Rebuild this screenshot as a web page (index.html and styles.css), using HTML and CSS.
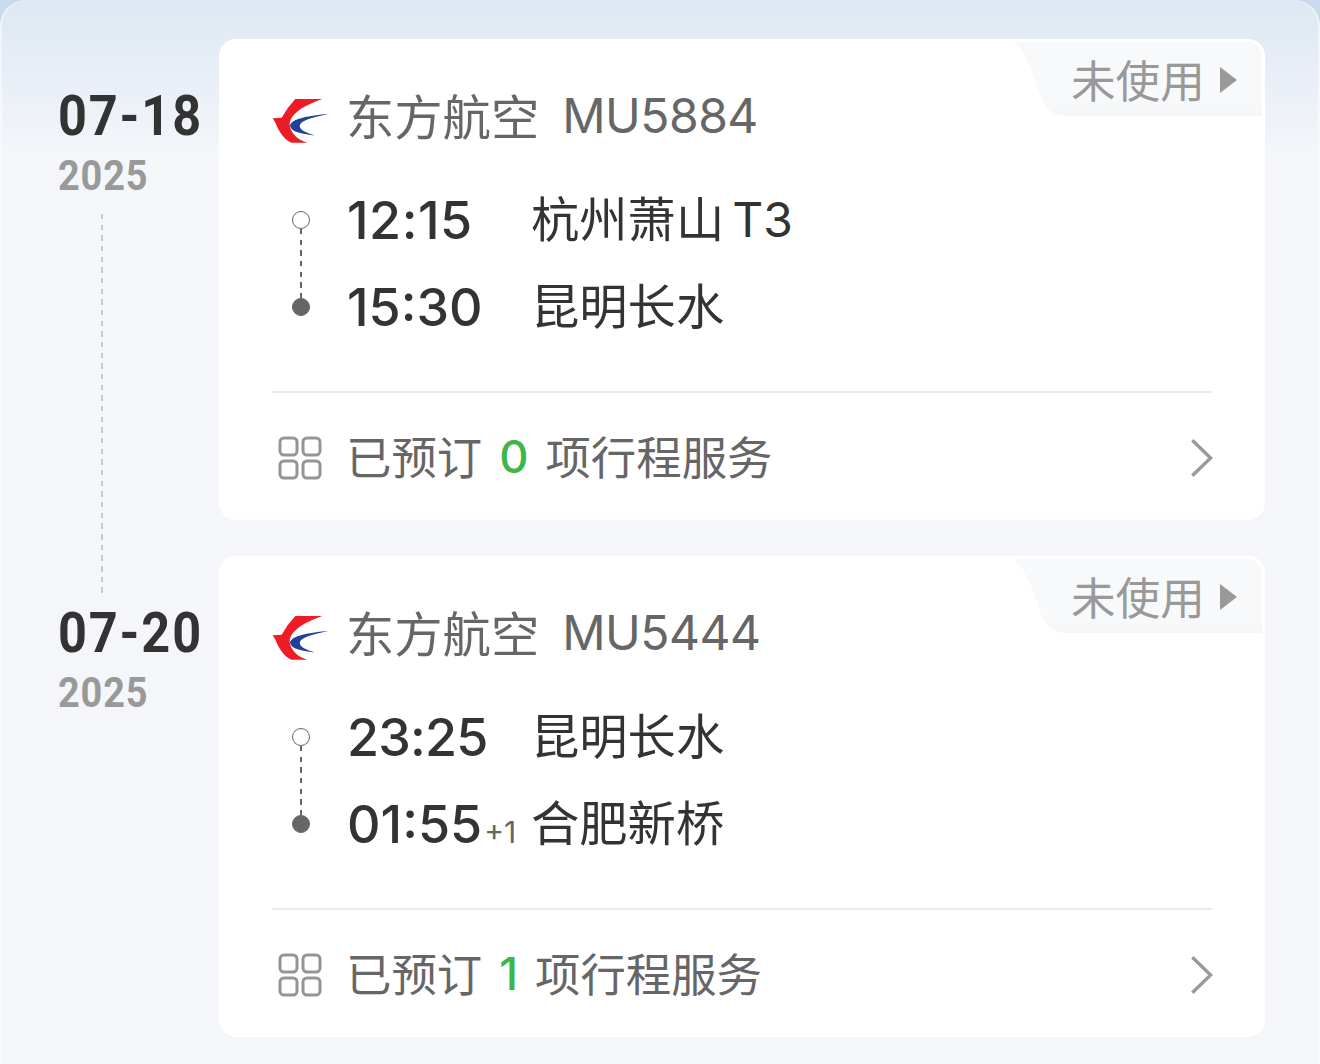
FILE: index.html
```
<!DOCTYPE html>
<html lang="zh-CN">
<head>
  <meta charset="UTF-8">
  <meta name="viewport" content="width=device-width, initial-scale=1.0">
  <title>我的行程</title>
  <link rel="stylesheet" href="styles.css">
</head>
<body>
  <!-- 公用图标 -->
  <svg class="sprite" aria-hidden="true">
    <defs>
      <linearGradient id="tagFill" x1="0" y1="0" x2="0" y2="1">
        <stop offset="0" stop-color="#f8f9fb"/>
        <stop offset=".8" stop-color="#f8f9fb"/>
        <stop offset="1" stop-color="#f5f6f7"/>
      </linearGradient>
    </defs>
    <symbol id="logo" viewBox="12 18 171 138">
      <path fill="#ee1c25" d="M14 79 L41 77 Q58 46 82 21 H163 C120 37 66 60 65 98 C68 122 86 142 118 152 H70 C48 143 32 118 23 94Z"/>
      <path fill="#21409a" d="M181 66 C125 70 70 80 66 101 C70 121 105 126 142 130 C114 122 95 114 95 101 C98 85 135 76 181 66Z"/>
    </symbol>
    <symbol id="tag" viewBox="0 0 250 75">
      <path fill="url(#tagFill)" d="M0 0 H232 Q249 0 249 17 V74 H54 C39 74 32 66 27 52 C20 33 14 10 0 0Z"/>
    </symbol>
    <symbol id="service" viewBox="0 0 44 44">
      <g fill="none" stroke="#959595" stroke-width="3">
        <rect x="2" y="2" width="17" height="17" rx="4"/>
        <rect x="25" y="2" width="17" height="17" rx="4"/>
        <rect x="2" y="25" width="17" height="17" rx="4"/>
        <rect x="25" y="25" width="17" height="17" rx="4"/>
      </g>
    </symbol>
    <symbol id="arrow" viewBox="0 0 22 38">
      <path fill="none" stroke="#999" stroke-width="3.4" d="M1.3 1.3 L19.6 19 L1.3 36.7"/>
    </symbol>
  </svg>

  <div class="panel">
    <section class="trip">
      <div class="date">
        <div class="day">07-18</div>
        <div class="year">2025</div>
        <div class="date-line"></div>
      </div>
      <div class="card">
        <div class="status">
          <svg class="status-bg"><use href="#tag"/></svg>
          <span>未使用</span>
          <i class="triangle"></i>
        </div>
        <div class="flight">
          <svg class="logo"><use href="#logo"/></svg>
          <span class="airline">东方航空</span>
          <span class="number">MU5884</span>
        </div>
        <div class="route">
          <div class="track"><i class="dot"></i><i class="dash"></i><i class="dot full"></i></div>
          <div class="stops">
            <div class="stop">
              <div class="time wide">12:15</div>
              <div class="airport">杭州萧山<span class="terminal">T3</span></div>
            </div>
            <div class="stop">
              <div class="time">15:30</div>
              <div class="airport">昆明长水</div>
            </div>
          </div>
        </div>
        <div class="service">
          <svg class="service-icon"><use href="#service"/></svg>
          <div class="service-text"><span>已预订</span><b>0</b><span>项行程服务</span></div>
          <svg class="arrow"><use href="#arrow"/></svg>
        </div>
      </div>
    </section>

    <section class="trip">
      <div class="date">
        <div class="day">07-20</div>
        <div class="year">2025</div>
      </div>
      <div class="card">
        <div class="status">
          <svg class="status-bg"><use href="#tag"/></svg>
          <span>未使用</span>
          <i class="triangle"></i>
        </div>
        <div class="flight">
          <svg class="logo"><use href="#logo"/></svg>
          <span class="airline">东方航空</span>
          <span class="number">MU5444</span>
        </div>
        <div class="route">
          <div class="track"><i class="dot"></i><i class="dash"></i><i class="dot full"></i></div>
          <div class="stops">
            <div class="stop">
              <div class="time narrow">23:25</div>
              <div class="airport">昆明长水</div>
            </div>
            <div class="stop">
              <div class="time">01:55<small>+1</small></div>
              <div class="airport">合肥新桥</div>
            </div>
          </div>
        </div>
        <div class="service">
          <svg class="service-icon"><use href="#service"/></svg>
          <div class="service-text"><span>已预订</span><b>1</b><span>项行程服务</span></div>
          <svg class="arrow"><use href="#arrow"/></svg>
        </div>
      </div>
    </section>
  </div>
</body>
</html>
```

FILE: styles.css
```
* { box-sizing: border-box; margin: 0; padding: 0; }

body {
  background: #c9daee;
  font-family: Inter, 'Noto Sans CJK SC', sans-serif;
  color: #333;
}

.sprite { position: absolute; width: 0; height: 0; }

.panel {
  display: flex;
  flex-direction: column;
  gap: 36px;
  height: 1064px;
  padding: 39px 55px 0 59px;
  border-radius: 26px 26px 0 0;
  background: linear-gradient(#dfe7f2 0, #e3ebf5 40px, #f4f6fa 155px);
  box-shadow: inset 2px 0 1px rgba(255,255,255,.5), inset -2px 0 1px rgba(255,255,255,.5);
  overflow: hidden;
}

.trip {
  display: flex;
  height: 481px;
}

/* 左侧日期 */
.date {
  width: 160px;
  padding-top: 47px;
  font-family: Roboto, sans-serif;
  font-weight: 700;
  white-space: nowrap;
}

/* 数字压窄，接近 DIN 字形 */
.day, .year {
  transform: scaleX(.9);
  transform-origin: left;
}

.day {
  height: 60px;
  margin-left: -1px;
  line-height: 60px;
  font-size: 56px;
  letter-spacing: 2.1px;
}

.year {
  height: 50px;
  margin: 5px 0 0 -1px;
  line-height: 50px;
  font-size: 42px;
  letter-spacing: 1px;
  color: #999;
}

.date-line {
  width: 2px;
  height: 384px;
  margin: 13px 0 0 42px;
  background: repeating-linear-gradient(#c8c9cc 0 5.4px, transparent 5.4px 10.67px);
}

/* 航班卡片 */
.card {
  position: relative;
  width: 1046px;
  height: 481px;
  padding: 0 53px;
  background: #fff;
  border-radius: 17px;
}

.status {
  position: absolute;
  top: 3px;
  right: 3px;
  width: 249px;
  height: 75px;
  padding-left: 58px;
  display: flex;
  align-items: center;
  font-size: 44.6px;
  line-height: 75px;
  color: #999;
}

.status span {
  position: relative;
  top: -1px;
  font-family: 'Noto Sans CJK SC', sans-serif;
}

.status-bg {
  position: absolute;
  left: 0;
  top: 0;
  width: 250px;
  height: 75px;
}

.triangle {
  position: relative;
  margin-left: 15px;
  border-left: 17px solid #999;
  border-top: 13px solid transparent;
  border-bottom: 13px solid transparent;
}

.flight {
  display: flex;
  align-items: center;
  height: 155px;
  font-size: 48px;
  color: #666;
}

.logo {
  width: 57px;
  height: 46px;
  margin: 9px 17px 0 0;
}

.airline {
  margin-top: -5px;
  font-size: 48.3px;
}

.number {
  margin: -2px 0 0 23px;
  letter-spacing: -.5px;
}

.route {
  display: flex;
  height: 197px;
  padding-top: 17px;
}

.track {
  display: flex;
  flex-direction: column;
  align-items: center;
  width: 18px;
  margin: 0 37px 0 20px;
}

.dot {
  width: 18px;
  height: 18px;
  border: 1.5px solid #666;
  border-radius: 50%;
}

.dot.full { background: #666; }

.dash {
  width: 2px;
  height: 69px;
  background: repeating-linear-gradient(#666 0 5.4px, transparent 5.4px 10.67px);
}

.stops { margin-top: -34px; }

.stop {
  display: flex;
  height: 87px;
  line-height: 87px;
  white-space: nowrap;
}

.time {
  width: 184px;
  font-size: 52px;
  font-weight: 500;
}

.time.wide { letter-spacing: .5px; }
.time.narrow { letter-spacing: -.8px; }

.time small {
  margin-left: 2px;
  font-size: 30px;
  font-weight: 400;
  color: #666;
}

.airport {
  margin-top: -1px;
  font-size: 48.3px;
}

.terminal {
  margin-left: 8px;
  font-size: 48px;
}

/* 行程服务 */
.service {
  display: flex;
  align-items: center;
  height: 128px;
  padding-left: 6px;
  border-top: 2px solid #ebebeb;
}

.service-icon {
  width: 44px;
  height: 44px;
  margin-top: 3px;
}

.service-text {
  display: flex;
  align-items: center;
  flex: 1;
  margin-left: 24px;
  font-size: 45.4px;
  color: #666;
}

.service-text span { margin-top: -2px; }

.service-text b {
  margin: 1px 17px 0;
  font-weight: 500;
  color: #3fb54a;
}

.arrow {
  width: 22px;
  height: 38px;
  margin: 3px -1px 0 0;
}
```
